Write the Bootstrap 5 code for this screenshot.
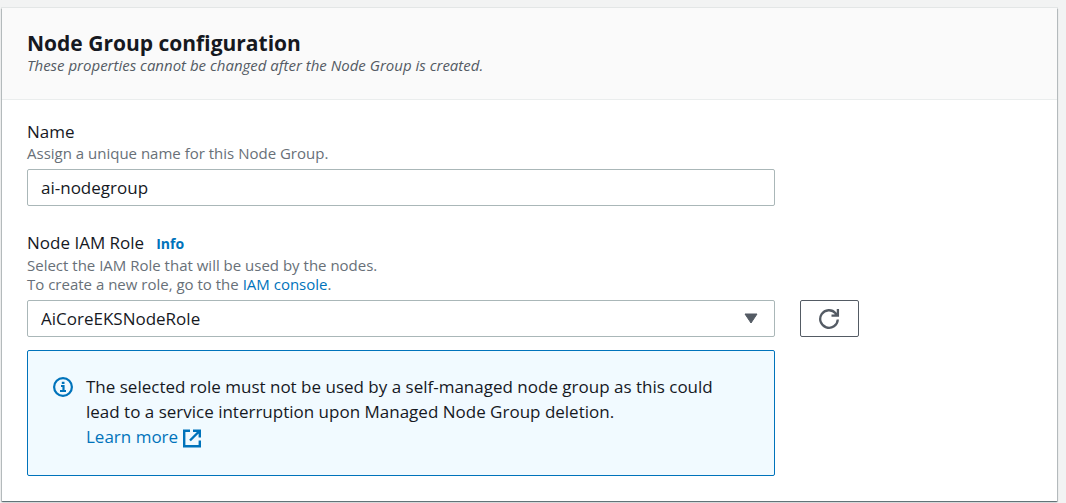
<!DOCTYPE html>
<html lang="en">
<head>
<meta charset="utf-8">
<meta name="viewport" content="width=device-width, initial-scale=1">
<title>Node Group configuration</title>
<link rel="stylesheet" href="https://cdn.jsdelivr.net/npm/bootstrap@5.3.0/dist/css/bootstrap.min.css">
<style>
  body { background: #f2f3f3; color: #16191f; font-family: "Open Sans", "Noto Sans", sans-serif; font-size: 17px; line-height: 25px; }
  a { color: #0073bb; text-decoration: none; }
  a:hover { text-decoration: underline; }
  .page { padding: 8px 9px 2px 2px; }
  .panel { --bs-card-border-radius: 0; --bs-card-border-width: 0; color: inherit;
    box-shadow: 0 1px 1px rgba(0,28,36,.4), 1px 1px 1px rgba(0,28,36,.15), -1px 1px 1px rgba(0,28,36,.15), 0 0 0 1px rgba(0,28,36,.06); }
  .panel-head { background: #fafafa; border-bottom: 1px solid #eaeded; padding: 23px 25px 24px; }
  .panel-head h2 { font-size: 21px; line-height: 25px; font-weight: 700; margin: 0; }
  .panel-head p { font-size: 15px; line-height: 19px; font-style: italic; color: #545b64; margin: 0; }
  .panel-main { padding: 19px 25px 25px; }
  .row { --bs-gutter-x: 25px; }
  .hint { font-size: 15px; line-height: 19px; color: #687078; margin-bottom: 6px; }
  .info-link { font-size: 14px; font-weight: 700; margin-left: 12px; }
  .field { height: 37px; padding: 0 13px; border: 1px solid #aab7b8; border-radius: 2px; color: #16191f; font-size: 17px; line-height: 25px; }
  .form-select.field { background-image: url("data:image/svg+xml,%3csvg xmlns='http://www.w3.org/2000/svg' viewBox='0 0 14 11'%3e%3cpath fill='%23545b64' stroke='%23545b64' stroke-linejoin='round' d='M1 1h12L7 10z'/%3e%3c/svg%3e"); background-size: 14px 11px; background-position: right 16px center; }
  .refresh { width: 59px; height: 37px; padding: 0; border: 1px solid #545b64; border-radius: 2px; color: #545b64; }
  .notice { --bs-alert-color: #16191f; background: #f1faff; border: 1px solid #0073bb; border-radius: 2px; padding: 23px 48px 26px 24px; margin: 13px 0 0; }
  svg { flex: none; }
</style>
</head>
<body>
<main class="page">
  <section class="card panel">
    <header class="panel-head">
      <h2>Node Group configuration</h2>
      <p>These properties cannot be changed after the Node Group is created.</p>
    </header>
    <form class="panel-main">
      <div class="row mb-4">
        <div class="col-9">
          <label class="d-block" for="name">Name</label>
          <div class="hint" id="nameHint">Assign a unique name for this Node Group.</div>
          <input class="form-control field" id="name" type="text" value="ai-nodegroup" aria-describedby="nameHint">
        </div>
      </div>
      <div class="row">
        <div class="col-9">
          <label for="role">Node IAM Role</label><a class="info-link" href="#">Info</a>
          <div class="hint" id="roleHint">Select the IAM Role that will be used by the nodes.<br>To create a new role, go to the <a href="#">IAM console</a>.</div>
          <select class="form-select field" id="role" aria-describedby="roleHint"><option>AiCoreEKSNodeRole</option></select>
        </div>
        <div class="col-3 d-flex align-items-end">
          <button class="btn refresh d-flex align-items-center justify-content-center" type="button" aria-label="Refresh roles">
            <svg width="22" height="22" viewBox="0 0 22 22" fill="none" stroke="currentColor" stroke-width="2.300"><path d="M19.800 11.500a8.800 8.800 0 1 1-2.200-6.300L19 7"/><path d="M19.900 1v6.700H13.500"/><path d="M15 7.500L19 5v3z" fill="currentColor" stroke="none"/></svg>
          </button>
        </div>
      </div>
      <div class="row">
        <div class="col-9">
          <div class="alert notice d-flex" role="note">
            <svg width="22" height="25" viewBox="0 0 22 25" fill="none" stroke="#0073bb" stroke-width="2.200"><circle cx="11" cy="13" r="8.900"/><path d="M9 12h2.500v4.500M8 17h6M9.800 8.800h2.700"/></svg>
            <div class="ps-2 ms-1">The selected role must not be used by a self-managed node group as this could lead to a service interruption upon Managed Node Group deletion.<br>
              <a class="d-inline-flex align-items-center" href="#">Learn more
                <svg class="ms-1 mt-1" width="19" height="19" viewBox="0 0 19 19" fill="none" stroke="currentColor" stroke-width="2.400"><path d="M8 1.700H2.200v15.600h15.600V11.500M11 1.700h6.800V8.500M17.500 2L8 11.500"/></svg></a>
            </div>
          </div>
        </div>
      </div>
    </form>
  </section>
</main>
<script src="https://cdn.jsdelivr.net/npm/bootstrap@5.3.0/dist/js/bootstrap.bundle.min.js"></script>
</body>
</html>
